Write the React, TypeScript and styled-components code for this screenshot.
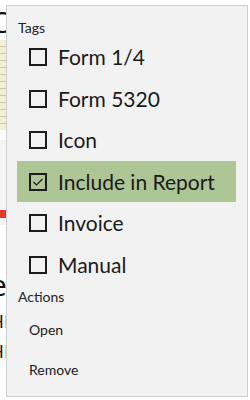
import React from "react";
import styled, { createGlobalStyle } from "styled-components";

const Global = createGlobalStyle`
  html, body { margin: 0; padding: 0; background: #ffffff; }
  body { font-family: "Lato", "Open Sans", sans-serif; }
`;

const Page = styled.div`
  position: relative;
  width: 250px;
  height: 400px;
  overflow: hidden;
  background: #ffffff;
`;

const Behind = styled.div`
  display: flex;
  flex-direction: column;
  align-items: flex-start;
  padding-top: 8px;
  margin-left: -10px;
  width: 200px;
`;

const BackText = styled.div<{ h: number; size: number }>`
  font-size: ${(p) => p.size}px;
  line-height: ${(p) => p.h}px;
  height: ${(p) => p.h}px;
  color: #111;
  font-family: "Open Sans", sans-serif;
`;

const Spacer = styled.div<{ h: number }>`
  height: ${(p) => p.h}px;
`;

const Thumb = styled.div<{ h: number; tone: string; spot?: boolean }>`
  width: 100px;
  height: ${(p) => p.h}px;
  margin: 4px 0 6px;
  background-color: ${(p) => p.tone};
  background-image: ${(p) =>
    p.spot
      ? "linear-gradient(180deg, transparent 0 70px, #e23a2c 70px 78px, transparent 78px)"
      : "repeating-linear-gradient(180deg, transparent 0 6px, rgba(120,130,100,0.35) 6px 7px)"};
`;

const Menu = styled.div`
  position: absolute;
  left: 6px;
  top: 5px;
  width: 242px;
  height: 392px;
  background: #f2f2f2;
  border: 1px solid #cfcfcf;
  display: flex;
  flex-direction: column;
  padding: 0 10px 0 10px;
  box-sizing: border-box;
`;

const Header = styled.div<{ h: number; top: number }>`
  height: ${(p) => p.h}px;
  padding-top: ${(p) => p.top}px;
  box-sizing: border-box;
  font-size: 14px;
  line-height: 16px;
  color: #222;
  padding-left: 1px;
`;

const TagRow = styled.div<{ active?: boolean }>`
  height: 41.5px;
  display: flex;
  align-items: center;
  padding-left: 12px;
  gap: 11px;
  margin-right: 1px;
  background: ${(p) => (p.active ? "#aec596" : "transparent")};
  font-size: 21px;
  color: #1a1a1a;
`;

const Box = styled.span`
  width: 14px;
  height: 14px;
  border: 2px solid #1c1c1c;
  display: inline-flex;
  align-items: center;
  justify-content: center;
  flex: none;
  margin-top: 1px;
`;

const ActionRow = styled.div`
  height: 40px;
  display: flex;
  align-items: center;
  padding-left: 12px;
  font-size: 14px;
  color: #1a1a1a;
`;

const tags = ["Form 1/4", "Form 5320", "Icon", "Include in Report", "Invoice", "Manual"];

export default function App() {
  return (
    <Page>
      <Global />
      <Behind>
        <BackText h={28} size={30}>CC</BackText>
        <Thumb h={90} tone="#f3efd2" />
        <Thumb h={85} tone="#f4f4f4" spot />
        <Spacer h={39} />
        <BackText h={30} size={30}>ee</BackText>
        <Spacer h={6} />
        <BackText h={30} size={19}>HH</BackText>
        <BackText h={30} size={19}>HH</BackText>
      </Behind>
      <Menu>
        <Header h={30} top={14}>Tags</Header>
        {tags.map((t, i) => (
          <TagRow key={t} active={i === 3}>
            <Box>
              {i === 3 && (
                <svg width="12" height="10" viewBox="0 0 12 10">
                  <path d="M1.5 5 L4.5 8 L10.5 2" fill="none" stroke="#1c1c1c" strokeWidth="1.2" />
                </svg>
              )}
            </Box>
            {t}
          </TagRow>
        ))}
        <Header h={24} top={4}>Actions</Header>
        <ActionRow>Open</ActionRow>
        <ActionRow>Remove</ActionRow>
      </Menu>
    </Page>
  );
}
